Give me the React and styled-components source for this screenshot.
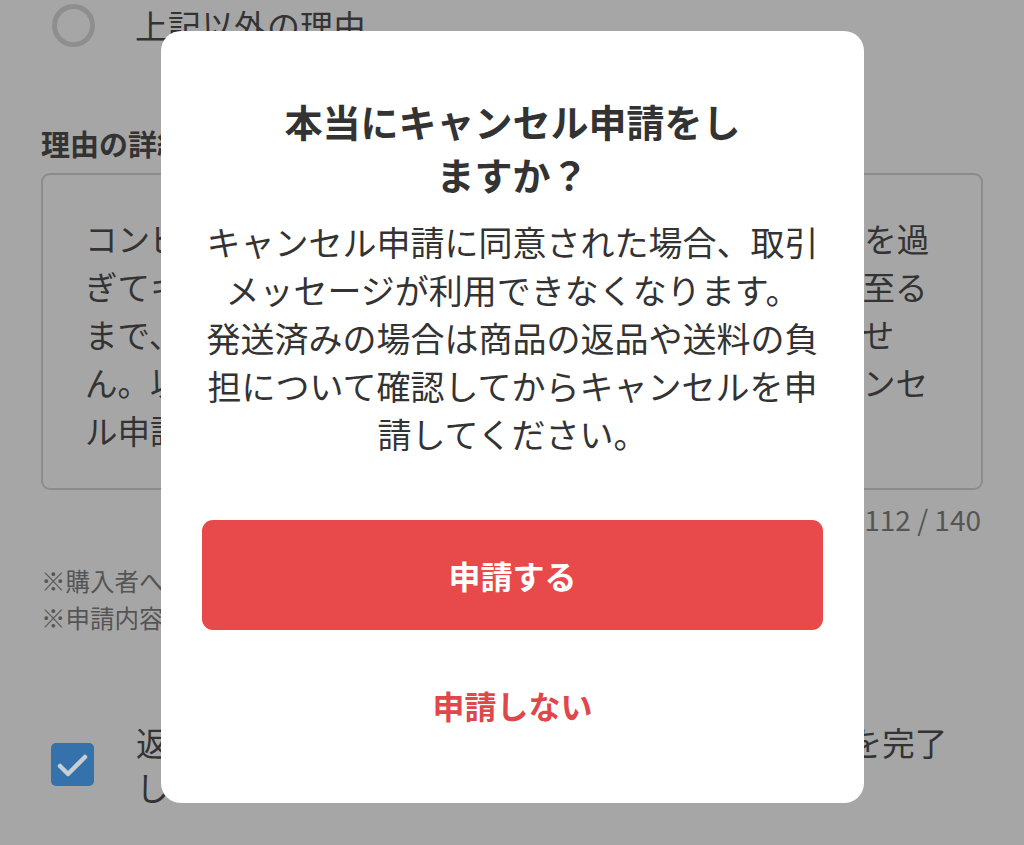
import React from "react";
import styled, { createGlobalStyle } from "styled-components";

const Global = createGlobalStyle`
  html, body { margin: 0; padding: 0; }
  body {
    background: #a6a6a6;
    font-family: "Noto Sans CJK JP", "Noto Sans", sans-serif;
    overflow: hidden;
  }
`;

const Page = styled.div`
  width: 1024px;
  height: 845px;
  box-sizing: border-box;
  padding: 0 41px 0 41px;
  display: flex;
  flex-direction: column;
  color: #333;
`;

const RadioRow = styled.div`
  height: 50px;
  display: flex;
  align-items: center;
  gap: 40px;
  padding-left: 11px;
`;

const Radio = styled.span`
  width: 43px;
  height: 43px;
  box-sizing: border-box;
  border: 5px solid #8e8e8e;
  border-radius: 50%;
  flex: none;
`;

const RadioLabel = styled.span`
  font-size: 33px;
  line-height: 40px;
  color: #333;
  white-space: nowrap;
`;

const SectionLabel = styled.div`
  margin-top: 73px;
  font-size: 29px;
  line-height: 40px;
  font-weight: 700;
  color: #333;
`;

const TextBox = styled.div`
  margin-top: 10px;
  height: 317px;
  box-sizing: border-box;
  border: 2px solid #8c8c8c;
  border-radius: 9px;
  padding: 39px 20px 0 42px;
  font-size: 32.5px;
  line-height: 48px;
  color: #333;
  white-space: pre;
  overflow: hidden;
`;

const Counter = styled.div`
  margin-top: 11px;
  text-align: right;
  padding-right: 2px;
  font-size: 28px;
  line-height: 36px;
  color: #555;
`;

const Notes = styled.div`
  margin-top: 25px;
  font-size: 24.5px;
  line-height: 37px;
  color: #555;
  white-space: nowrap;
`;

const CheckRow = styled.div`
  margin-top: 83px;
  display: flex;
  align-items: center;
  gap: 42px;
  padding-left: 10px;
`;

const CheckBox = styled.span`
  width: 43px;
  height: 43px;
  border-radius: 5px;
  background: #3571aa;
  flex: none;
  display: flex;
  align-items: center;
  justify-content: center;
`;

const CheckLabel = styled.div`
  font-size: 32.5px;
  line-height: 45px;
  color: #333;
  white-space: pre;
`;

const Dialog = styled.div`
  position: fixed;
  left: 161px;
  top: 31px;
  width: 703px;
  box-sizing: border-box;
  background: #fff;
  border-radius: 20px;
  padding: 63px 41px 43px 41px;
  display: flex;
  flex-direction: column;
  align-items: stretch;
`;

const Title = styled.h2`
  margin: 0 auto;
  max-width: 476px;
  font-size: 38px;
  line-height: 53px;
  font-weight: 700;
  color: #333;
  text-align: center;
`;

const Message = styled.p`
  margin: 18px 0 0 0;
  font-size: 34px;
  line-height: 48px;
  color: #333;
  text-align: center;
`;

const ActionButton = styled.button`
  height: 110px;
  border: none;
  border-radius: 11px;
  font-family: inherit;
  font-size: 32px;
  font-weight: 700;
  cursor: pointer;
  background: ${(p) => (p.$primary ? "#e8494b" : "transparent")};
  color: ${(p) => (p.$primary ? "#fff" : "#e0474b")};
  margin-top: ${(p) => (p.$primary ? "62px" : "20px")};
`;

export default function App() {
  return (
    <>
      <Global />
      <Page>
        <RadioRow>
          <Radio />
          <RadioLabel>上記以外の理由</RadioLabel>
        </RadioRow>
        <SectionLabel>理由の詳細</SectionLabel>
        <TextBox>
          {"コンビニ払いを選択しましたが、うっかり支払い期限を過\nぎてキャンセルとなってしまいました。再度の取引に至る\nまで、出品者様にはお手数をおかけして申し訳ありませ\nん。以上の理由により、誠に勝手ながら本取引のキャンセ\nル申請をさせていただきます。"}
        </TextBox>
        <Counter>112 / 140</Counter>
        <Notes>
          <div>※購入者への確認を行ったうえで申請してください。</div>
          <div>※申請内容は取引相手に通知されます。</div>
        </Notes>
        <CheckRow>
          <CheckBox>
            <svg width="43" height="43" viewBox="0 0 43 43">
              <polyline
                points="9,23 17,31 34,14"
                fill="none"
                stroke="#c9ced4"
                strokeWidth="4.5"
                strokeLinecap="round"
                strokeLinejoin="round"
              />
            </svg>
          </CheckBox>
          <CheckLabel>{"返品や送料の負担について購入者との確認と合意を完了\nしました"}</CheckLabel>
        </CheckRow>
      </Page>
      <Dialog role="dialog">
        <Title>本当にキャンセル申請をしますか？</Title>
        <Message>
          キャンセル申請に同意された場合、取引メッセージが利用できなくなります。
          <br />
          発送済みの場合は商品の返品や送料の負担について確認してからキャンセルを申請してください。
        </Message>
        <ActionButton $primary>申請する</ActionButton>
        <ActionButton>申請しない</ActionButton>
      </Dialog>
    </>
  );
}
